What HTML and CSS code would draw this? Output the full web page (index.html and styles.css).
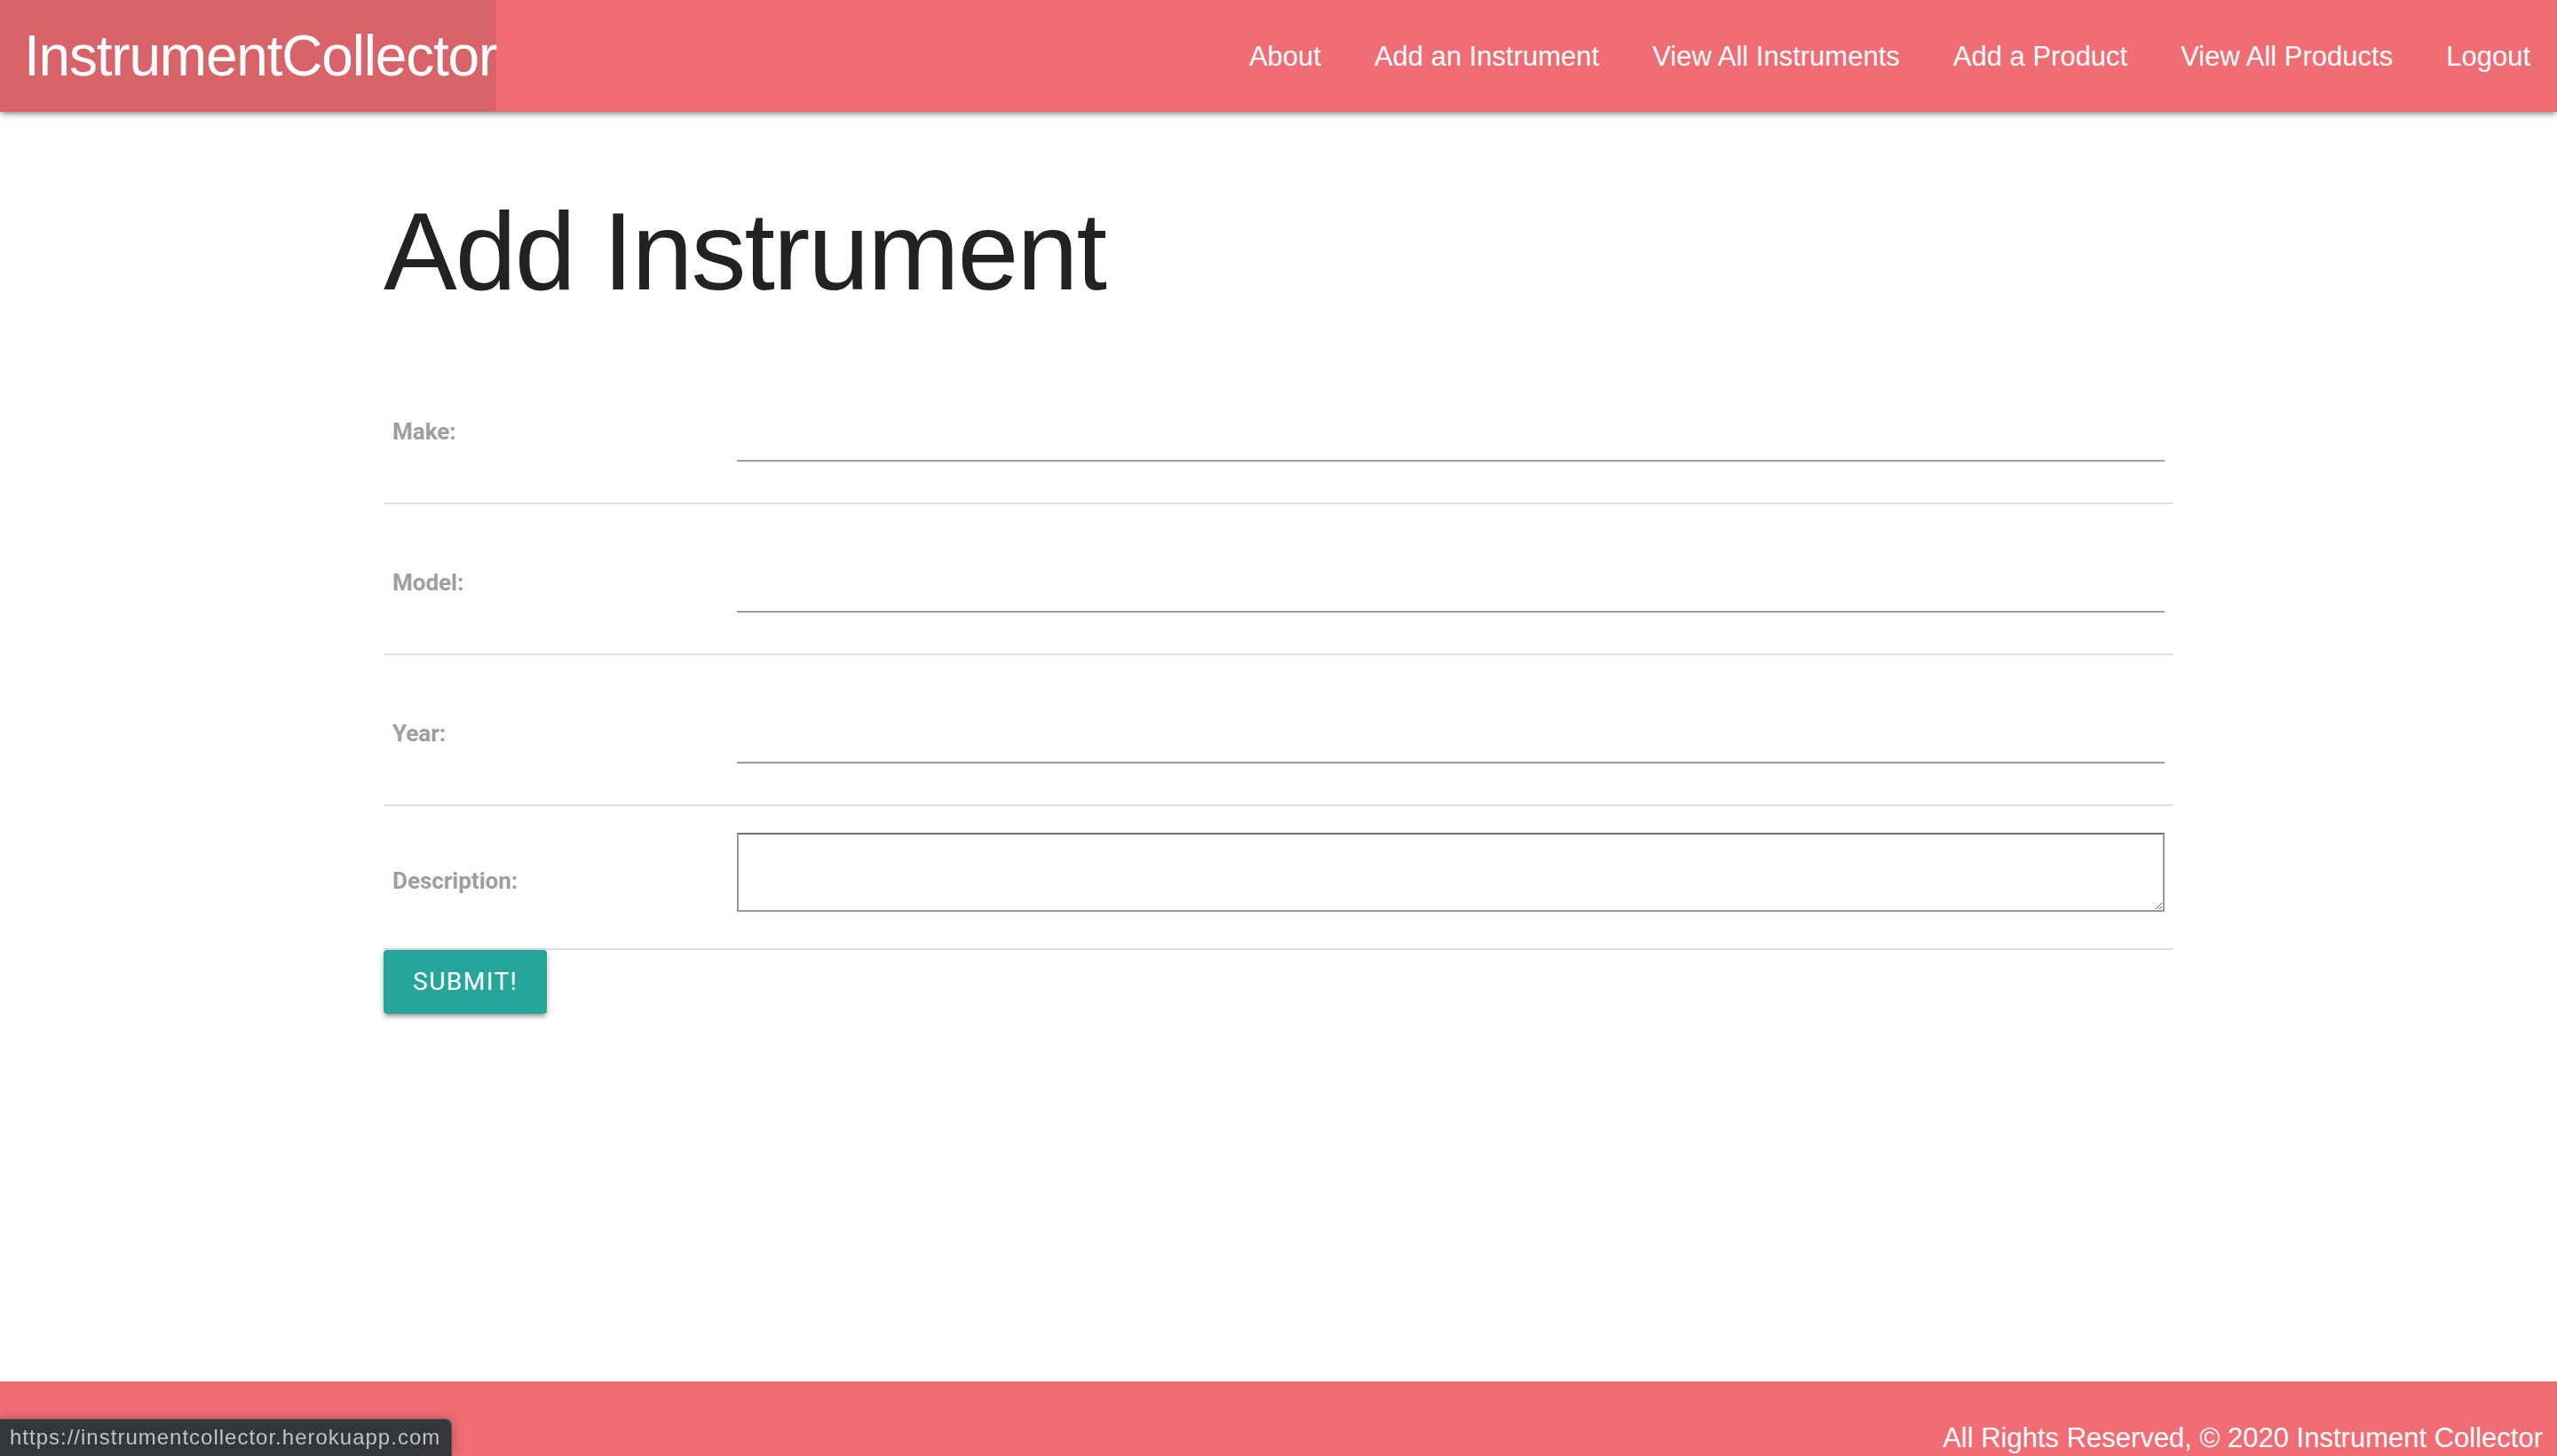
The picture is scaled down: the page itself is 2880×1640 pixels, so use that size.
FILE: index.html
```html
<!DOCTYPE html>
<html lang="en">
<head>
<meta charset="utf-8">
<title>Add Instrument</title>
<link rel="stylesheet" href="styles.css">
</head>
<body>
<div class="page">
  <nav class="navbar">
    <a class="brand" href="#">InstrumentCollector</a>
    <ul class="nav-links">
      <li><a href="#">About</a></li>
      <li><a href="#">Add an Instrument</a></li>
      <li><a href="#">View All Instruments</a></li>
      <li><a href="#">Add a Product</a></li>
      <li><a href="#">View All Products</a></li>
      <li><a href="#">Logout</a></li>
    </ul>
  </nav>

  <main class="container">
    <h1 class="title">Add Instrument</h1>
    <form class="form">
      <table class="form-table">
        <tbody>
          <tr>
            <th><label for="make">Make:</label></th>
            <td><input type="text" id="make" class="field"></td>
          </tr>
          <tr>
            <th><label for="model">Model:</label></th>
            <td><input type="text" id="model" class="field"></td>
          </tr>
          <tr>
            <th><label for="year">Year:</label></th>
            <td><input type="text" id="year" class="field"></td>
          </tr>
          <tr>
            <th><label for="description">Description:</label></th>
            <td><textarea id="description" class="area"></textarea></td>
          </tr>
        </tbody>
      </table>
      <button type="button" class="btn">Submit!</button>
    </form>
  </main>

  <footer class="footer">
    <span>All Rights Reserved, &copy; 2020 Instrument Collector</span>
  </footer>
</div>
<div class="status">https://instrumentcollector.herokuapp.com</div>
</body>
</html>
```

FILE: styles.css
```css
* { box-sizing: border-box; }

html, body {
  margin: 0;
  padding: 0;
  background: #ffffff;
}

body {
  font-family: "Liberation Sans", Arial, sans-serif;
  color: #212121;
  overflow: hidden;
}

.page {
  min-height: 1640px;
  display: flex;
  flex-direction: column;
}

/* ---------- navbar ---------- */
.navbar {
  position: relative;
  z-index: 2;
  height: 126px;
  background: #f06d75;
  display: flex;
  align-items: stretch;
  justify-content: space-between;
  box-shadow: 0 4px 4px 0 rgba(0,0,0,.14), 0 6px 2px -4px rgba(0,0,0,.12), 0 2px 10px 0 rgba(0,0,0,.2);
}

.brand {
  display: block;
  background: #d86369;
  color: #ffffff;
  text-decoration: none;
  font-family: "Liberation Sans", Arial, sans-serif;
  font-size: 64px;
  letter-spacing: -1.2px;
  line-height: 126px;
  padding: 0 0 0 27px;
  white-space: nowrap;
}

.nav-links {
  list-style: none;
  margin: 0;
  padding: 0;
  display: flex;
}

.nav-links a {
  display: block;
  color: #ffffff;
  text-decoration: none;
  font-size: 31px;
  line-height: 128px;
  padding: 0 30px;
  white-space: nowrap;
}

/* ---------- main ---------- */
.container {
  flex: 1;
  width: 70%;
  margin: 0 auto;
}

.title {
  font-family: "Liberation Sans", Arial, sans-serif;
  font-weight: 400;
  font-size: 124px;
  letter-spacing: -2px;
  line-height: 136px;
  color: #222222;
  margin: 89px 0 47px;
}

.form-table {
  width: 100%;
  border-collapse: separate;
  border-spacing: 0;
  table-layout: fixed;
}

.form-table th,
.form-table td {
  border-bottom: 2px solid #e0e0e0;
  padding: 30px 10px;
}

.form-table th {
  width: 388px;
  text-align: left;
  vertical-align: middle;
  padding-top: 37px;
  padding-bottom: 30px;
  font-family: Roboto, "Liberation Sans", sans-serif;
  font-weight: 700;
  font-size: 26px;
  color: #9e9e9e;
}

.form-table td {
  vertical-align: top;
}

.field {
  display: block;
  width: 100%;
  height: 92px;
  margin: 0 0 16px;
  padding: 0;
  border: 0;
  border-bottom: 2px solid #9e9e9e;
  background: transparent;
  outline: none;
  font-family: Roboto, sans-serif;
  font-size: 32px;
}

.area {
  display: block;
  width: 100%;
  height: 89px;
  margin: 0 0 11px;
  padding: 4px;
  border: 2px solid #999999;
  border-top-color: #707070;
  border-radius: 0;
  background: #ffffff;
  outline: none;
  font-family: Roboto, sans-serif;
  font-size: 26px;
}

.btn {
  display: inline-block;
  height: 72px;
  line-height: 72px;
  padding: 0 33px;
  border: 0;
  border-radius: 4px;
  background: #26a69a;
  color: #ffffff;
  font-family: Roboto, "Liberation Sans", sans-serif;
  font-size: 28px;
  letter-spacing: 1.5px;
  text-transform: uppercase;
  cursor: pointer;
  box-shadow: 0 4px 4px 0 rgba(0,0,0,.14), 0 6px 2px -4px rgba(0,0,0,.12), 0 2px 10px 0 rgba(0,0,0,.2);
}

/* ---------- footer ---------- */
.footer {
  height: 84px;
  background: #f06d75;
  color: #ffffff;
  text-align: right;
  font-size: 31px;
  line-height: 36px;
  padding: 46px 16px 2px 0;
  white-space: nowrap;
}

/* ---------- browser status bubble ---------- */
.status {
  position: fixed;
  left: 0;
  bottom: 0;
  width: 509px;
  height: 42px;
  background: #35363a;
  border-top: 1px solid #55565a;
  border-right: 1px solid #55565a;
  border-top-right-radius: 8px;
  color: #c2c2c2;
  font-family: "Liberation Sans", Arial, sans-serif;
  font-size: 24px;
  letter-spacing: 1px;
  line-height: 40px;
  padding-left: 11px;
  white-space: nowrap;
  box-shadow: 0 0 14px rgba(0,0,0,.25);
}
```
